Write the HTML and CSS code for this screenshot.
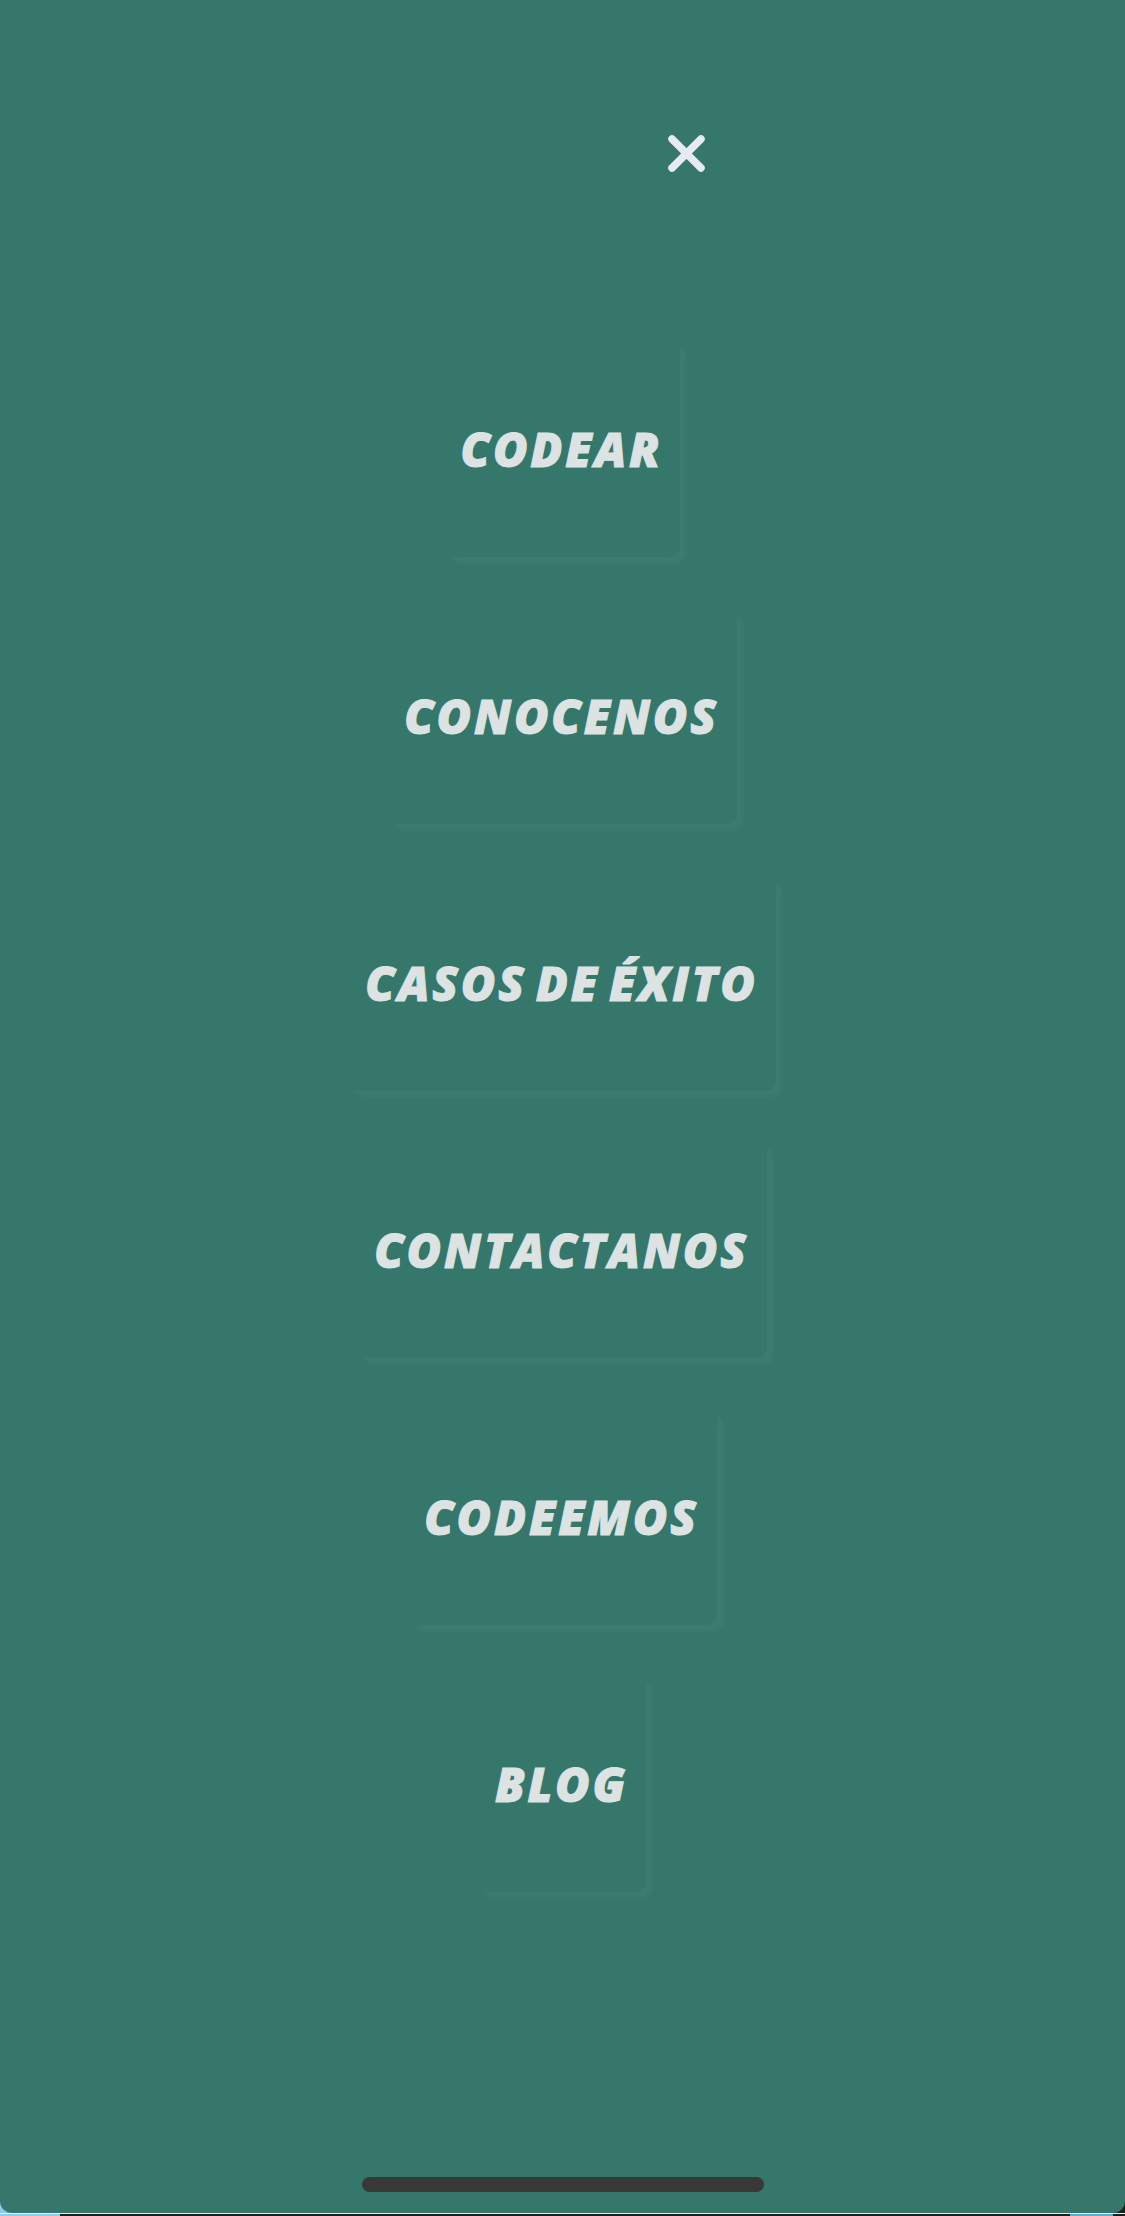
FILE: index.html
```html
<!DOCTYPE html>
<html lang="es">
<head>
<meta charset="utf-8">
<title>Menú</title>
<link rel="stylesheet" href="styles.css">
</head>
<body>
<div class="screen">
  <header class="topbar">
    <button class="close" aria-label="Cerrar">
      <svg width="37" height="37" viewBox="0 0 37 37"><path d="M4 4 L33 33 M33 4 L4 33" stroke="#e8eaf2" stroke-width="7.5" stroke-linecap="round" fill="none"/></svg>
    </button>
  </header>
  <nav class="menu">
    <a class="item" href="#">CODEAR</a>
    <a class="item" href="#">CONOCENOS</a>
    <a class="item" href="#">CASOS DE ÉXITO</a>
    <a class="item" href="#">CONTACTANOS</a>
    <a class="item" href="#">CODEEMOS</a>
    <a class="item" href="#">BLOG</a>
  </nav>
  <div class="home-wrap"><div class="home-indicator"></div></div>
</div>
<div class="bottom-strip"></div>
</body>
</html>
```
FILE: styles.css
```css
html, body {
  margin: 0;
  padding: 0;
}
body {
  width: 1125px;
  height: 2216px;
  overflow: hidden;
  background: linear-gradient(to right, #8ecbee 0 60px, #1e1e1e 60px 1070px, #5fa9d9 1070px 1113px, #1e1e1e 1113px);
  font-family: "Open Sans", "Lato", sans-serif;
}
.screen {
  height: 2213px;
  background: #35786b;
  border-radius: 0 0 12px 12px;
  display: flex;
  flex-direction: column;
}
.topbar {
  height: 341px;
  box-sizing: border-box;
  padding: 135px 0 0 668px;
}
.close {
  display: block;
  width: 37px;
  height: 37px;
  padding: 0;
  margin: 0;
  border: 0;
  background: none;
}
.close svg { display: block; }
.menu {
  display: flex;
  flex-direction: column;
  align-items: center;
  gap: 51px;
}
.item {
  display: block;
  padding: 72px 18px 72px 16px;
  line-height: 72px;
  font-size: 47px;
  font-weight: 800;
  font-style: italic;
  letter-spacing: 2.8px;
  word-spacing: -6px;
  color: #dde3e3;
  -webkit-text-stroke: 1px #dde3e3;
  text-decoration: none;
  border-radius: 10px;
  box-shadow: 6px 6px 4px rgba(255, 255, 255, 0.04);
  white-space: nowrap;
}
.home-wrap {
  margin-top: auto;
  padding-bottom: 21px;
  display: flex;
  justify-content: center;
}
.home-indicator {
  width: 402px;
  height: 15px;
  border-radius: 8px;
  background: #383838;
}
.bottom-strip {
  height: 1px;
  background: #e9ecec;
}
```
